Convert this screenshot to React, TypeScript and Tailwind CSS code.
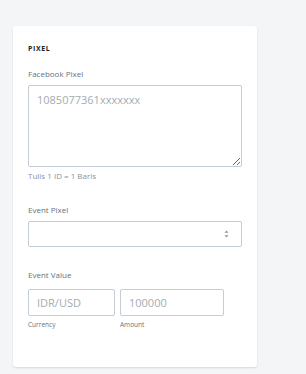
export default function App() {
  const font = { fontFamily: '"Open Sans", "Noto Sans", sans-serif' };
  return (
    <div className="min-h-[374px] w-[306px] bg-[#f4f5f7] pt-[26px] pl-[13px]" style={font}>
      <div className="w-[244px] h-[341px] bg-white rounded-[3px] shadow-[0_1px_2px_rgba(0,0,0,0.12)] px-[15px] pt-[18px]">
        <div className="text-[7px] leading-[10px] font-bold tracking-[0.6px] text-[#1a1d21]">PIXEL</div>

        <div className="mt-[14px] text-[8px] leading-[12px] text-[#637381]">Facebook Pixel</div>
        <textarea
          className="mt-[5px] block w-[214px] h-[82px] border border-[#c4cdd5] rounded-[2px] px-[8px] pt-[6px] text-[11px] leading-[16px] placeholder:text-[#a5abb2] outline-none"
          placeholder="1085077361xxxxxxx"
        />
        <div className="mt-[4px] text-[8px] leading-[10px] text-[#8a939c]">Tulis 1 ID = 1 Baris</div>

        <div className="mt-[23px] text-[8px] leading-[12px] text-[#637381]">Event Pixel</div>
        <div className="mt-[5px] w-[214px] h-[26px] border border-[#c4cdd5] rounded-[2px] flex items-center justify-end pr-[12px]">
          <svg width="5" height="8" viewBox="0 0 5 8">
            <path d="M2.5 0.5 L4.5 2.8 L0.5 2.8 Z" fill="#8a939c" />
            <path d="M2.5 7.5 L4.5 5.2 L0.5 5.2 Z" fill="#8a939c" />
          </svg>
        </div>

        <div className="mt-[22px] text-[8px] leading-[12px] text-[#637381]">Event Value</div>
        <div className="mt-[8px] flex gap-[5px]">
          <div className="flex flex-col">
            <input
              className="block w-[87px] h-[27px] border border-[#c4cdd5] rounded-[2px] px-[8px] text-[11px] placeholder:text-[#a5abb2] outline-none"
              placeholder="IDR/USD"
            />
            <div className="mt-[4px] text-[6.5px] leading-[10px] text-[#637381]">Currency</div>
          </div>
          <div className="flex flex-col">
            <input
              className="block w-[104px] h-[27px] border border-[#c4cdd5] rounded-[2px] px-[8px] text-[11px] placeholder:text-[#a5abb2] outline-none"
              placeholder="100000"
            />
            <div className="mt-[4px] text-[6.5px] leading-[10px] text-[#637381]">Amount</div>
          </div>
        </div>
      </div>
    </div>
  );
}
